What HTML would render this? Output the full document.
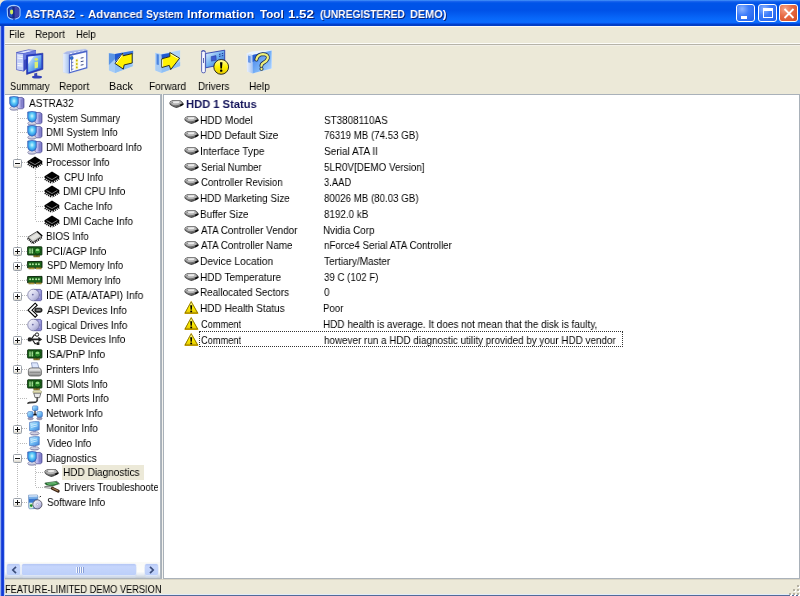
<!DOCTYPE html><html><head><meta charset="utf-8"><style>
*{margin:0;padding:0;box-sizing:border-box}
html,body{width:800px;height:596px;overflow:hidden;background:#ECE9D8;font-family:"Liberation Sans", sans-serif;font-size:10px;color:#000}
.a{position:absolute}
.t{will-change:transform;position:absolute;white-space:nowrap;line-height:12px;height:12px}
svg.i{position:absolute;overflow:visible}
</style></head><body>
<svg width="0" height="0" style="position:absolute">
<defs>
<radialGradient id="gscreen" cx="0.5" cy="0.42" r="0.62"><stop offset="0" stop-color="#d0faff"/><stop offset="0.4" stop-color="#5ccaf8"/><stop offset="0.85" stop-color="#2a88e0"/><stop offset="1" stop-color="#2a60c0"/></radialGradient>
<linearGradient id="gtower" x1="0" y1="0" x2="1" y2="0"><stop offset="0" stop-color="#d8d8fa"/><stop offset="0.6" stop-color="#9c9ae0"/><stop offset="1" stop-color="#6a68b8"/></linearGradient>
<linearGradient id="gbase" x1="0" y1="0" x2="0" y2="1"><stop offset="0" stop-color="#ffffff"/><stop offset="1" stop-color="#a8a8c8"/></linearGradient>
<linearGradient id="ggray" x1="0" y1="0" x2="0" y2="1"><stop offset="0" stop-color="#f4f4f4"/><stop offset="1" stop-color="#8a8a8a"/></linearGradient>
<linearGradient id="gyel" x1="0" y1="0" x2="0" y2="1"><stop offset="0" stop-color="#fffab0"/><stop offset="0.5" stop-color="#fff200"/><stop offset="1" stop-color="#e8c800"/></linearGradient>
<linearGradient id="gyel2" x1="0" y1="0" x2="1" y2="1"><stop offset="0" stop-color="#ffff80"/><stop offset="1" stop-color="#f0e000"/></linearGradient>
<linearGradient id="gdisc" x1="0" y1="0" x2="1" y2="1"><stop offset="0" stop-color="#ffffff"/><stop offset="0.6" stop-color="#c8c8e8"/><stop offset="1" stop-color="#8888b8"/></linearGradient>
<linearGradient id="gmon" x1="0" y1="0" x2="1" y2="1"><stop offset="0" stop-color="#d8f4ff"/><stop offset="0.45" stop-color="#78c4f8"/><stop offset="1" stop-color="#3a80d8"/></linearGradient>
<linearGradient id="gboxl" x1="0" y1="0" x2="1" y2="0"><stop offset="0" stop-color="#e8f0ff"/><stop offset="1" stop-color="#a8c4f0"/></linearGradient>
<linearGradient id="gboxf" x1="0" y1="0" x2="1" y2="1"><stop offset="0" stop-color="#3a78e8"/><stop offset="0.6" stop-color="#80b8f8"/><stop offset="1" stop-color="#b8d8ff"/></linearGradient>
<linearGradient id="gscr2" x1="0" y1="0" x2="1" y2="1"><stop offset="0" stop-color="#f0f8ff"/><stop offset="0.5" stop-color="#70b0f0"/><stop offset="1" stop-color="#2860d0"/></linearGradient>

















</defs></svg>
<div class="a" style="left:0;top:0;width:800px;height:26px;background:linear-gradient(180deg,#4a98fa 0px,#1a64ee 1.4px,#0054e8 3px,#0052e8 40%,#0868fa 72%,#0a6cff 86%,#0654ea 90%,#0040c8 94%,#003cc4 98%,#2a60d8 100%);border-radius:7px 0 0 0"></div>
<svg class="i" style="left:5px;top:4px" width="17" height="17" viewBox="0 0 17 17"><path d="M2.2 5 Q3.5 1.6 9 1.4 Q14.4 1.8 15 5 L15 11.6 Q14.2 14.6 9 15.2 Q3.4 14.8 2.6 11.8Z" fill="#162a88" stroke="#a8ccff" stroke-width="1.1"/><path d="M9.6 2.6 Q13.6 3 14 5.4 L14 11.4 Q13.4 13.6 9.6 14Z" fill="#4a4ab8" opacity="0.8"/><path d="M3.8 5.4 Q4.4 3.2 7.4 2.8 L7.4 13.6 Q4.2 13 3.8 11Z" fill="#2a5ad8" opacity="0.7"/><ellipse cx="6.6" cy="8" rx="1.6" ry="2.4" fill="#d0ec60"/><path d="M7.5 14.6 L9 16.4 L10.4 14.6Z" fill="#1a3aa8"/></svg>
<div class="t" style="left:25.20px;top:5.85px;height:16px;line-height:16px;font-size:11.6px;transform:scaleX(0.9415);transform-origin:0 0;font-weight:bold;color:#fff;text-shadow:1px 1px 0 #0a1e6e">ASTRA32</div>
<div class="t" style="left:80.40px;top:5.85px;height:16px;line-height:16px;font-size:11.6px;transform:scaleX(0.975);transform-origin:0 0;font-weight:bold;color:#fff;text-shadow:1px 1px 0 #0a1e6e">-</div>
<div class="t" style="left:87.70px;top:5.85px;height:16px;line-height:16px;font-size:11.6px;transform:scaleX(0.9873);transform-origin:0 0;font-weight:bold;color:#fff;text-shadow:1px 1px 0 #0a1e6e">Advanced</div>
<div class="t" style="left:146.00px;top:5.85px;height:16px;line-height:16px;font-size:11.6px;transform:scaleX(0.8951);transform-origin:0 0;font-weight:bold;color:#fff;text-shadow:1px 1px 0 #0a1e6e">System</div>
<div class="t" style="left:187.40px;top:5.85px;height:16px;line-height:16px;font-size:11.6px;transform:scaleX(1.0547);transform-origin:0 0;font-weight:bold;color:#fff;text-shadow:1px 1px 0 #0a1e6e">Information</div>
<div class="t" style="left:260.30px;top:5.85px;height:16px;line-height:16px;font-size:11.6px;transform:scaleX(0.987);transform-origin:0 0;font-weight:bold;color:#fff;text-shadow:1px 1px 0 #0a1e6e">Tool</div>
<div class="t" style="left:288.00px;top:5.85px;height:16px;line-height:16px;font-size:11.6px;transform:scaleX(1.15);transform-origin:0 0;font-weight:bold;color:#fff;text-shadow:1px 1px 0 #0a1e6e">1.52</div>
<div class="t" style="left:319.60px;top:5.85px;height:16px;line-height:16px;font-size:11.6px;transform:scaleX(0.8844);transform-origin:0 0;font-weight:bold;color:#fff;text-shadow:1px 1px 0 #0a1e6e">(UNREGISTERED</div>
<div class="t" style="left:409.80px;top:5.85px;height:16px;line-height:16px;font-size:11.6px;transform:scaleX(0.9421);transform-origin:0 0;font-weight:bold;color:#fff;text-shadow:1px 1px 0 #0a1e6e">DEMO)</div>
<div class="a" style="left:736px;top:4px;width:19px;height:18px;border:1px solid #fff;border-radius:3px;background:radial-gradient(circle at 30% 25%,#8cb4ff 0%,#3d7dfb 40%,#1f5fe8 100%)"><div class="a" style="left:4px;top:11px;width:6px;height:3px;background:#fff"></div></div>
<div class="a" style="left:757.5px;top:4px;width:19px;height:18px;border:1px solid #fff;border-radius:3px;background:radial-gradient(circle at 30% 25%,#8cb4ff 0%,#3d7dfb 40%,#1f5fe8 100%)"><div class="a" style="left:4px;top:3px;width:10px;height:10px;border:1px solid #fff;border-top-width:3px"></div></div>
<div class="a" style="left:779px;top:4px;width:19px;height:18px;border:1px solid #fff;border-radius:3px;background:radial-gradient(circle at 30% 25%,#f6a487 0%,#e76a43 45%,#d24b22 100%)"><svg class="i" style="left:3px;top:3px" width="12" height="11" viewBox="0 0 12 11"><path d="M1.5 1 L10.5 10 M10.5 1 L1.5 10" stroke="#fff" stroke-width="1.8"/></svg></div>
<div class="a" style="left:0;top:26px;width:5px;height:570px;background:linear-gradient(90deg,#b8ccf4 0,#6a8ee8 1px,#1a40d8 1.6px,#0c34d4 3px,#2a5ae4 4.2px,#e4ecfa 4.6px,#f4f6fa 5px)"></div>
<div class="a" style="left:5px;top:593.6px;width:795px;height:2.4px;background:linear-gradient(180deg,#e2ecf8 0,#e2ecf8 45%,#5a72a0 55%,#4a6290 100%)"></div>
<div class="a" style="left:5px;top:26px;width:795px;height:1px;background:#fafaf8"></div>
<div class="t" style="left:8.70px;top:28.30px;height:12px;line-height:12px;font-size:10.8px;transform:scaleX(0.9);transform-origin:0 0;">File</div>
<div class="t" style="left:34.88px;top:28.30px;height:12px;line-height:12px;font-size:10.8px;transform:scaleX(0.9219);transform-origin:0 0;">Report</div>
<div class="t" style="left:76.11px;top:28.30px;height:12px;line-height:12px;font-size:10.8px;transform:scaleX(0.8857);transform-origin:0 0;">Help</div>
<div class="a" style="left:5px;top:43px;width:795px;height:1px;background:#fcfcf8"></div>
<div class="a" style="left:5px;top:44px;width:795px;height:1px;background:#b6b3a8"></div>
<div class="a" style="left:5px;top:45px;width:795px;height:1px;background:#f2f0e8"></div>
<svg class="i" style="left:14px;top:48px" width="30" height="30" viewBox="0 0 30 30">
 <path d="M2.4 4.5 L14.5 1.8 L22 2.5 L22 12 L9.7 23.5 L2.4 22Z" fill="#3a48c0"/>
 <path d="M2.4 4.5 L14.5 1.8 L22 2.5 L9.7 5.5Z" fill="#e0e8ff" stroke="#3a48c0" stroke-width="0.6"/>
 <path d="M2.9 5.2 L9.4 6 L9.4 22.8 L2.9 21.6Z" fill="#c4d0f8"/>
 <path d="M3.6 7.8 L8.6 8.4 M3.6 10 L8.6 10.6 M3.6 15.5 L8.6 16 M3.6 17.6 L8.6 18" stroke="#ffffff" stroke-width="0.9"/>
 <path d="M9.7 5.5 L22 2.5 L22 8 L9.7 12Z" fill="#6a7ae0"/>
 <path d="M12.6 7.2 L28.9 5.2 L28.9 21.3 L12.6 26.4Z" fill="#2840c8" stroke="#1a2a98" stroke-width="0.6"/>
 <path d="M14.2 8.8 L27.4 7 L27.4 20 L14.2 24.2Z" fill="url(#gscr2)"/>
 <path d="M14.2 8.8 L20 8 L14.2 16Z" fill="#ffffff" opacity="0.7"/>
 <ellipse cx="22.3" cy="11.4" rx="1.8" ry="1.3" fill="#d8ec68"/>
 <path d="M20.6 14 L24 13.4 L24 19.6 L20.6 20.4Z" fill="#dcef70"/>
 <path d="M20.2 25.6 L23.2 24.8 L23.2 28 L20.2 28.4Z" fill="#3a48b8"/>
 <ellipse cx="23" cy="29" rx="5" ry="1.5" fill="#3040b8"/>
</svg>
<div class="t" style="left:9.60px;top:79.90px;height:12px;line-height:12px;font-size:10.8px;transform:scaleX(0.8565);transform-origin:0 0;">Summary</div>
<svg class="i" style="left:60.5px;top:48px" width="30" height="30" viewBox="0 0 30 30">
 <path d="M2.3 5.4 L6 3.6 L24 1 L26.6 2 L26.6 20.2 L7.8 25.6 L2.3 24.2Z" fill="#dfe6f8" stroke="#c8d0e8" stroke-width="0.5"/>
 <path d="M2.3 5.4 L7.8 6.6 L7.8 25.4 L2.3 24.2Z" fill="url(#gboxl)"/>
 <path d="M2.3 5.4 L6 3.6 L24.4 1.2 L26.3 2.3 L7.8 6.6Z" fill="#aab8e8"/>
 <path d="M9 5.8 L11 5.4 M13 5 L15 4.6 M17 4.2 L19 3.8 M21 3.4 L23 3" stroke="#ffffff" stroke-width="0.9"/>
 <path d="M7.8 6.6 L26.3 2.3 L26.3 20.2 L7.8 25.4Z" fill="#4a64c8"/>
 <path d="M9 8 L25.2 4.2 L25.2 19.3 L9 23.9Z" fill="#fbfcff"/>
 <path d="M10.6 11 L10.6 22.6 M10.6 14.6 L12.4 14.2 M10.6 18 L12.4 17.6 M10.6 21.4 L12.4 21" stroke="#3048a8" stroke-width="0.7"/>
 <circle cx="10.6" cy="9.9" r="1.7" fill="#2a70d8" stroke="#1a3a90" stroke-width="0.4"/>
 <path d="M14.4 11.2 L17.2 10.6 L17.2 21.2 L14.4 22Z" fill="#f6f6b8"/>
 <circle cx="15.8" cy="12.5" r="0.9" fill="#c8b000"/><circle cx="15.8" cy="16" r="0.9" fill="#c8b000"/><circle cx="15.8" cy="19.4" r="0.9" fill="#c8b000"/>
 <path d="M19.7 10.2 L22.5 9.6 M19.7 13.7 L22.5 13.1 M19.7 17.2 L22.5 16.6" stroke="#2a3a78" stroke-width="0.9"/>
</svg>
<div class="t" style="left:59.47px;top:79.90px;height:12px;line-height:12px;font-size:10.8px;transform:scaleX(0.9281);transform-origin:0 0;">Report</div>
<svg class="i" style="left:106px;top:48px" width="30" height="30" viewBox="0 0 30 30">
 <path d="M2.9 5.2 L9 6 L27.1 2.8 L27.1 18 L9 24.9 L2.9 22.6Z" fill="#eaf4ff"/>
 <path d="M2.9 5.2 L9 6 L9 24.9 L2.9 22.6Z" fill="#a8ccf4"/>
 <path d="M2.9 5.2 L9 6 L9 11 L2.9 17Z" fill="#5a94e4"/>
 <path d="M9 6 L27.1 2.8 L27.1 18 L9 24.9Z" fill="#a8d0fa"/>
 <path d="M9 16 L20 13 L27.1 18 L9 24.9Z" fill="#90c0f4"/>
 <path d="M9 6 L17 4.6 L9 14Z" fill="#2058d0"/>
 <path d="M17 4.6 L27.1 2.8 L27.1 6 L18 7.6Z" fill="#3a74dc"/>
 <path d="M9 15.5 L16.8 5.2 L17 7.8 L26.2 5.6 L26.2 15 L18.2 16.9 L17.3 21.1Z" fill="#fff200" stroke="#1a1a1a" stroke-width="0.9" stroke-linejoin="round"/>
 <path d="M10.2 15.2 L16.4 6.8" stroke="#ffffff" stroke-width="0.9"/>
</svg>
<div class="t" style="left:109.31px;top:79.90px;height:12px;line-height:12px;font-size:10.8px;transform:scaleX(0.987);transform-origin:0 0;">Back</div>
<svg class="i" style="left:152.5px;top:48px" width="30" height="30" viewBox="0 0 30 30">
 <path d="M2.2 4.7 L8.3 6.1 L27.1 2.3 L27.1 17.9 L8.3 24.9 L2.2 22.6Z" fill="#eaf4ff"/>
 <path d="M2.2 4.7 L8.3 6.1 L8.3 24.9 L2.2 22.6Z" fill="#a8ccf4"/>
 <path d="M3.6 6 L5.8 6.6 L5.8 17 L3.6 16.4Z" fill="#4a84e0"/>
 <path d="M8.3 6.1 L27.1 2.3 L27.1 17.9 L8.3 24.9Z" fill="#b0d4fa"/>
 <path d="M8.3 20 L27.1 14 L27.1 17.9 L8.3 24.9Z" fill="#90c0f4"/>
 <path d="M8.3 6.6 L16.6 5 L16.8 8.6 L8.8 10.8Z" fill="#2058d0"/>
 <path d="M8.8 10.8 L16.8 8.6 L16.8 4.5 L26.6 10.3 L17.7 21.6 L16.3 17.4 L8.8 19.5Z" fill="#fff200" stroke="#1a1a1a" stroke-width="0.9" stroke-linejoin="round"/>
 <path d="M17.6 6.2 L25.4 10.6" stroke="#ffffff" stroke-width="0.8"/>
 <path d="M9.6 11.6 L9.6 18.6" stroke="#ffffff" stroke-width="0.8"/>
</svg>
<div class="t" style="left:148.66px;top:79.90px;height:12px;line-height:12px;font-size:10.8px;transform:scaleX(0.9368);transform-origin:0 0;">Forward</div>
<svg class="i" style="left:199px;top:48px" width="30" height="30" viewBox="0 0 30 30">
 <path d="M6.6 5.5 L25.7 2.2 L25.7 16 L6.6 19.8Z" fill="url(#gscr2)" stroke="#2a40b0" stroke-width="0.9" stroke-linejoin="round"/>
 <path d="M12.2 8.6 L17 7.6 L17.2 12.2 L12.4 13.2Z" fill="#3a5ad0" stroke="#2a3a98" stroke-width="0.5"/>
 <path d="M20 6.4 L21.6 6.1 M20 8.4 L21.6 8.1 M22.8 5.6 L24.2 5.3 M22.8 7.8 L24.2 7.5" stroke="#1a2a88" stroke-width="0.9"/>
 <rect x="2.6" y="3" width="3.8" height="21.8" rx="1.5" fill="#f8f8ff" stroke="#3a48a8" stroke-width="0.8"/>
 <path d="M2 3.6 L4 2.4 L6.6 3.4" stroke="#3a48a8" stroke-width="0.8" fill="none"/>
 <path d="M4.5 10 L4.5 15" stroke="#4a58a8" stroke-width="0.9"/>
 <circle cx="22.2" cy="18.9" r="7.4" fill="url(#gyel)" stroke="#1a1a1a" stroke-width="0.9"/>
 <path d="M21 14.2 L23.4 14.2 L23 20.4 L21.4 20.4Z" fill="#000"/>
 <rect x="21.1" y="21.6" width="2.2" height="2.2" rx="0.6" fill="#000"/>
</svg>
<div class="t" style="left:197.68px;top:79.90px;height:12px;line-height:12px;font-size:10.8px;transform:scaleX(0.9182);transform-origin:0 0;">Drivers</div>
<svg class="i" style="left:244px;top:48px" width="30" height="30" viewBox="0 0 30 30">
 <path d="M2.8 5.2 L8 3.4 L27.6 2 L28 20.6 L8.6 25.4 L3 23.6Z" fill="#e8f4ff"/>
 <path d="M2.8 5.2 L8.6 7 L8.6 25.4 L3 23.6Z" fill="url(#gboxl)"/>
 <path d="M4 7.4 L6.6 8.2 L6.6 15 L4 14.2Z" fill="#3a78e0" opacity="0.7"/>
 <path d="M8.6 7 L27.6 2.6 L27.6 20.6 L8.6 25.4Z" fill="url(#gboxf)"/>
 <path d="M8.6 7 L19 4.6 L13 12 L8.6 14Z" fill="#1850c8" opacity="0.75"/>
 <path d="M12.4 11.6 Q13.6 6.4 19 6.2 Q24.6 6.4 23.8 10.4 Q23 13 19.6 14.8 Q17.4 16 17.4 18" stroke="#1a2a50" stroke-width="3.8" fill="none" stroke-linecap="round"/>
 <path d="M12.4 11.6 Q13.6 6.4 19 6.2 Q24.6 6.4 23.8 10.4 Q23 13 19.6 14.8 Q17.4 16 17.4 18" stroke="#eef07a" stroke-width="2.3" fill="none" stroke-linecap="round"/>
 <circle cx="17.5" cy="20.9" r="1.6" fill="#eef07a" stroke="#1a2a50" stroke-width="0.8"/>
</svg>
<div class="t" style="left:248.97px;top:79.90px;height:12px;line-height:12px;font-size:10.8px;transform:scaleX(0.9333);transform-origin:0 0;">Help</div>
<div class="a" style="left:5px;top:94px;width:157px;height:486px;background:#fff"></div>
<div class="a" style="left:5px;top:94px;width:157px;height:1px;background:#a9b1b9"></div>
<div class="a" style="left:160px;top:94px;width:2px;height:486px;background:linear-gradient(90deg,#b4bcc4,#a4acb4)"></div>
<div class="a" style="left:5px;top:578px;width:157px;height:2px;background:linear-gradient(180deg,#a4acb4,#c0c6cc)"></div>
<div class="a" style="left:162px;top:94px;width:1px;height:486px;background:#f2f2ee"></div>
<div class="a" style="left:163px;top:94px;width:637px;height:486px;background:#fff"></div>
<div class="a" style="left:163px;top:94px;width:637px;height:1px;background:#a9b1b9"></div>
<div class="a" style="left:163px;top:94px;width:1px;height:486px;background:#a9b1b9"></div>
<div class="a" style="left:798.5px;top:94px;width:1.5px;height:486px;background:#a9b1b9"></div>
<div class="a" style="left:163px;top:578px;width:637px;height:2px;background:linear-gradient(180deg,#a4acb4,#c0c6cc)"></div>
<div class="a" style="left:17px;top:109.8px;width:1px;height:392.06px;background:repeating-linear-gradient(180deg,#bababa 0 1px,transparent 1px 2px)"></div>
<div class="a" style="left:35px;top:168.92px;width:1px;height:52.120000000000005px;background:repeating-linear-gradient(180deg,#bababa 0 1px,transparent 1px 2px)"></div>
<div class="a" style="left:35px;top:464.52px;width:1px;height:22.560000000000002px;background:repeating-linear-gradient(180deg,#bababa 0 1px,transparent 1px 2px)"></div>
<svg class="i" style="left:8.5px;top:94.80px" width="16" height="16" viewBox="0 0 16 16"><path d="M8 2.6 L13 2.4 L15 3.8 L15 12.6 L13.4 13.8 L8 13.8Z" fill="url(#gtower)" stroke="#4a4890" stroke-width="0.7"/>
 <path d="M12.2 4.6 L12.2 12.4" stroke="#6a68b0" stroke-width="0.6"/>
 <ellipse cx="4.9" cy="13.4" rx="4.2" ry="1.9" fill="url(#gbase)" stroke="#70709a" stroke-width="0.6"/>
 <path d="M0.7 2 Q5 0.9 9.3 2 L9.3 8.4 Q9 11.4 5 12.3 Q1 11.4 0.7 8.4Z" fill="url(#gscreen)" stroke="#3a5ab0" stroke-width="0.7"/></svg>
<div class="t" style="left:28.50px;top:96.80px;height:12px;line-height:12px;font-size:10.8px;transform:scaleX(0.9312);transform-origin:0 0;">ASTRA32</div>
<div class="a" style="left:18px;top:118px;width:9px;height:1px;background:repeating-linear-gradient(90deg,#bababa 0 1px,transparent 1px 2px)"></div>
<svg class="i" style="left:26.5px;top:109.58px" width="16" height="16" viewBox="0 0 16 16"><path d="M8 2.6 L13 2.4 L15 3.8 L15 12.6 L13.4 13.8 L8 13.8Z" fill="url(#gtower)" stroke="#4a4890" stroke-width="0.7"/>
 <path d="M12.2 4.6 L12.2 12.4" stroke="#6a68b0" stroke-width="0.6"/>
 <ellipse cx="4.9" cy="13.4" rx="4.2" ry="1.9" fill="url(#gbase)" stroke="#70709a" stroke-width="0.6"/>
 <path d="M0.7 2 Q5 0.9 9.3 2 L9.3 8.4 Q9 11.4 5 12.3 Q1 11.4 0.7 8.4Z" fill="url(#gscreen)" stroke="#3a5ab0" stroke-width="0.7"/></svg>
<div class="t" style="left:47.00px;top:111.58px;height:12px;line-height:12px;font-size:10.8px;transform:scaleX(0.8588);transform-origin:0 0;">System Summary</div>
<div class="a" style="left:18px;top:132px;width:9px;height:1px;background:repeating-linear-gradient(90deg,#bababa 0 1px,transparent 1px 2px)"></div>
<svg class="i" style="left:26.5px;top:124.36px" width="16" height="16" viewBox="0 0 16 16"><path d="M8 2.6 L13 2.4 L15 3.8 L15 12.6 L13.4 13.8 L8 13.8Z" fill="url(#gtower)" stroke="#4a4890" stroke-width="0.7"/>
 <path d="M12.2 4.6 L12.2 12.4" stroke="#6a68b0" stroke-width="0.6"/>
 <ellipse cx="4.9" cy="13.4" rx="4.2" ry="1.9" fill="url(#gbase)" stroke="#70709a" stroke-width="0.6"/>
 <path d="M0.7 2 Q5 0.9 9.3 2 L9.3 8.4 Q9 11.4 5 12.3 Q1 11.4 0.7 8.4Z" fill="url(#gscreen)" stroke="#3a5ab0" stroke-width="0.7"/></svg>
<div class="t" style="left:46.10px;top:126.36px;height:12px;line-height:12px;font-size:10.8px;transform:scaleX(0.8987);transform-origin:0 0;">DMI System Info</div>
<div class="a" style="left:18px;top:147px;width:9px;height:1px;background:repeating-linear-gradient(90deg,#bababa 0 1px,transparent 1px 2px)"></div>
<svg class="i" style="left:26.5px;top:139.14px" width="16" height="16" viewBox="0 0 16 16"><path d="M8 2.6 L13 2.4 L15 3.8 L15 12.6 L13.4 13.8 L8 13.8Z" fill="url(#gtower)" stroke="#4a4890" stroke-width="0.7"/>
 <path d="M12.2 4.6 L12.2 12.4" stroke="#6a68b0" stroke-width="0.6"/>
 <ellipse cx="4.9" cy="13.4" rx="4.2" ry="1.9" fill="url(#gbase)" stroke="#70709a" stroke-width="0.6"/>
 <path d="M0.7 2 Q5 0.9 9.3 2 L9.3 8.4 Q9 11.4 5 12.3 Q1 11.4 0.7 8.4Z" fill="url(#gscreen)" stroke="#3a5ab0" stroke-width="0.7"/></svg>
<div class="t" style="left:46.09px;top:141.14px;height:12px;line-height:12px;font-size:10.8px;transform:scaleX(0.9135);transform-origin:0 0;">DMI Motherboard Info</div>
<div class="a" style="left:18px;top:162px;width:9px;height:1px;background:repeating-linear-gradient(90deg,#bababa 0 1px,transparent 1px 2px)"></div>
<svg class="i" style="left:26.5px;top:153.92px" width="16" height="16" viewBox="0 0 16 16"><path d="M0.8 10 L7.8 14 M15.2 9.5 L8.2 13.8" stroke="#000" stroke-width="2" stroke-dasharray="1.1 0.9"/>
 <path d="M0.5 7.2 L8 2.6 L15.3 7 L15.3 8.8 L8 13 L0.5 8.8Z" fill="#000"/>
 <path d="M2.5 7.6 L8 10.6 L13.4 7.4" stroke="#9a9a9a" stroke-width="0.8" fill="none"/></svg>
<div class="t" style="left:46.09px;top:155.92px;height:12px;line-height:12px;font-size:10.8px;transform:scaleX(0.9147);transform-origin:0 0;">Processor Info</div>
<div class="a" style="left:13px;top:159px;width:9px;height:9px;border:1px solid #9aa0a8;border-radius:1.5px;background:linear-gradient(180deg,#fff 0,#fff 55%,#d8d4c8 100%)"></div>
<div class="a" style="left:15px;top:163px;width:5px;height:1px;background:#111"></div>
<div class="a" style="left:36px;top:177px;width:8px;height:1px;background:repeating-linear-gradient(90deg,#bababa 0 1px,transparent 1px 2px)"></div>
<svg class="i" style="left:43.5px;top:168.70px" width="16" height="16" viewBox="0 0 16 16"><path d="M0.8 10 L7.8 14 M15.2 9.5 L8.2 13.8" stroke="#000" stroke-width="2" stroke-dasharray="1.1 0.9"/>
 <path d="M0.5 7.2 L8 2.6 L15.3 7 L15.3 8.8 L8 13 L0.5 8.8Z" fill="#000"/>
 <path d="M2.5 7.6 L8 10.6 L13.4 7.4" stroke="#9a9a9a" stroke-width="0.8" fill="none"/></svg>
<div class="t" style="left:64.00px;top:170.70px;height:12px;line-height:12px;font-size:10.8px;transform:scaleX(0.8955);transform-origin:0 0;">CPU Info</div>
<div class="a" style="left:36px;top:191px;width:8px;height:1px;background:repeating-linear-gradient(90deg,#bababa 0 1px,transparent 1px 2px)"></div>
<svg class="i" style="left:43.5px;top:183.48px" width="16" height="16" viewBox="0 0 16 16"><path d="M0.8 10 L7.8 14 M15.2 9.5 L8.2 13.8" stroke="#000" stroke-width="2" stroke-dasharray="1.1 0.9"/>
 <path d="M0.5 7.2 L8 2.6 L15.3 7 L15.3 8.8 L8 13 L0.5 8.8Z" fill="#000"/>
 <path d="M2.5 7.6 L8 10.6 L13.4 7.4" stroke="#9a9a9a" stroke-width="0.8" fill="none"/></svg>
<div class="t" style="left:63.06px;top:185.48px;height:12px;line-height:12px;font-size:10.8px;transform:scaleX(0.9385);transform-origin:0 0;">DMI CPU Info</div>
<div class="a" style="left:36px;top:206px;width:8px;height:1px;background:repeating-linear-gradient(90deg,#bababa 0 1px,transparent 1px 2px)"></div>
<svg class="i" style="left:43.5px;top:198.26px" width="16" height="16" viewBox="0 0 16 16"><path d="M0.8 10 L7.8 14 M15.2 9.5 L8.2 13.8" stroke="#000" stroke-width="2" stroke-dasharray="1.1 0.9"/>
 <path d="M0.5 7.2 L8 2.6 L15.3 7 L15.3 8.8 L8 13 L0.5 8.8Z" fill="#000"/>
 <path d="M2.5 7.6 L8 10.6 L13.4 7.4" stroke="#9a9a9a" stroke-width="0.8" fill="none"/></svg>
<div class="t" style="left:64.00px;top:200.26px;height:12px;line-height:12px;font-size:10.8px;transform:scaleX(0.9269);transform-origin:0 0;">Cache Info</div>
<div class="a" style="left:36px;top:221px;width:8px;height:1px;background:repeating-linear-gradient(90deg,#bababa 0 1px,transparent 1px 2px)"></div>
<svg class="i" style="left:43.5px;top:213.04px" width="16" height="16" viewBox="0 0 16 16"><path d="M0.8 10 L7.8 14 M15.2 9.5 L8.2 13.8" stroke="#000" stroke-width="2" stroke-dasharray="1.1 0.9"/>
 <path d="M0.5 7.2 L8 2.6 L15.3 7 L15.3 8.8 L8 13 L0.5 8.8Z" fill="#000"/>
 <path d="M2.5 7.6 L8 10.6 L13.4 7.4" stroke="#9a9a9a" stroke-width="0.8" fill="none"/></svg>
<div class="t" style="left:63.07px;top:215.04px;height:12px;line-height:12px;font-size:10.8px;transform:scaleX(0.9338);transform-origin:0 0;">DMI Cache Info</div>
<div class="a" style="left:18px;top:236px;width:9px;height:1px;background:repeating-linear-gradient(90deg,#bababa 0 1px,transparent 1px 2px)"></div>
<svg class="i" style="left:26.5px;top:227.82px" width="16" height="16" viewBox="0 0 16 16"><path d="M0.6 10.4 L6 15.4 L14.8 9.6" stroke="#000" stroke-width="1.8" stroke-dasharray="1.1 0.8" fill="none"/>
 <path d="M0.8 9.2 L10.2 3.4 L15.2 8 L6 14.2Z" fill="#cfcfcb" stroke="#3a3a3a" stroke-width="0.8" stroke-linejoin="round"/>
 <path d="M3 9.4 L10 5.2 L12.6 7.8 L6 12Z" fill="#e4e4e0"/>
 <path d="M10.2 3.4 L15.2 8" stroke="#000" stroke-width="1.3"/></svg>
<div class="t" style="left:46.08px;top:229.82px;height:12px;line-height:12px;font-size:10.8px;transform:scaleX(0.9152);transform-origin:0 0;">BIOS Info</div>
<div class="a" style="left:18px;top:251px;width:9px;height:1px;background:repeating-linear-gradient(90deg,#bababa 0 1px,transparent 1px 2px)"></div>
<svg class="i" style="left:26.5px;top:242.60px" width="16" height="16" viewBox="0 0 16 16"><rect x="6.5" y="11.6" width="6.2" height="2.6" fill="#6a5a18"/>
 <path d="M6.9 12.9 L12.4 12.9" stroke="#e8d070" stroke-width="1" stroke-dasharray="0.8 0.6"/>
 <rect x="0.6" y="3.8" width="14.3" height="8.2" rx="0.5" fill="#1c6a1c" stroke="#0a280a" stroke-width="0.9"/>
 <circle cx="3" cy="6" r="0.85" fill="#b8eca8"/><circle cx="5.3" cy="6" r="0.85" fill="#b8eca8"/>
 <circle cx="3" cy="7.9" r="0.85" fill="#b8eca8"/><circle cx="5.3" cy="7.9" r="0.85" fill="#b8eca8"/>
 <circle cx="3" cy="9.8" r="0.85" fill="#b8eca8"/><circle cx="5.3" cy="9.8" r="0.85" fill="#b8eca8"/>
 <path d="M1.8 5 L6.5 5 M1.8 11 L6.5 11" stroke="#0a300a" stroke-width="0.5"/>
 <ellipse cx="10.6" cy="7.9" rx="3.3" ry="3.2" fill="#2a8a2a" stroke="#0a300a" stroke-width="0.7"/>
 <ellipse cx="10.4" cy="6.9" rx="1.8" ry="1.2" fill="#90d880"/></svg>
<div class="t" style="left:46.06px;top:244.60px;height:12px;line-height:12px;font-size:10.8px;transform:scaleX(0.9365);transform-origin:0 0;">PCI/AGP Info</div>
<div class="a" style="left:13px;top:247px;width:9px;height:9px;border:1px solid #9aa0a8;border-radius:1.5px;background:linear-gradient(180deg,#fff 0,#fff 55%,#d8d4c8 100%)"></div>
<div class="a" style="left:15px;top:251px;width:5px;height:1px;background:#111"></div>
<div class="a" style="left:17px;top:249px;width:1px;height:5px;background:#111"></div>
<div class="a" style="left:18px;top:265px;width:9px;height:1px;background:repeating-linear-gradient(90deg,#bababa 0 1px,transparent 1px 2px)"></div>
<svg class="i" style="left:26.5px;top:257.38px" width="16" height="16" viewBox="0 0 16 16"><path d="M0.6 4.6 L15 4.4 L15 10.8 L8.8 10.8 L8.2 11.6 L7.6 10.8 L0.6 10.8 L0.6 8.6 L0.2 7.8 L0.6 7Z" fill="#1a621a" stroke="#061e06" stroke-width="0.9"/>
 <circle cx="3.1" cy="7.2" r="1" fill="#b0e8a0"/><circle cx="5.9" cy="7.2" r="1" fill="#b0e8a0"/>
 <circle cx="9.1" cy="7.2" r="1" fill="#b0e8a0"/><circle cx="11.9" cy="7.2" r="1" fill="#b0e8a0"/>
 <path d="M1.6 11.4 L7.4 11.4 M9 11.4 L14.4 11.4" stroke="#7a6a20" stroke-width="1.6"/>
 <path d="M1.6 11.3 L7.4 11.3 M9 11.3 L14.4 11.3" stroke="#f0d860" stroke-width="0.8" stroke-dasharray="0.7 0.5"/></svg>
<div class="t" style="left:47.00px;top:259.38px;height:12px;line-height:12px;font-size:10.8px;transform:scaleX(0.8941);transform-origin:0 0;">SPD Memory Info</div>
<div class="a" style="left:13px;top:262px;width:9px;height:9px;border:1px solid #9aa0a8;border-radius:1.5px;background:linear-gradient(180deg,#fff 0,#fff 55%,#d8d4c8 100%)"></div>
<div class="a" style="left:15px;top:266px;width:5px;height:1px;background:#111"></div>
<div class="a" style="left:17px;top:264px;width:1px;height:5px;background:#111"></div>
<div class="a" style="left:18px;top:280px;width:9px;height:1px;background:repeating-linear-gradient(90deg,#bababa 0 1px,transparent 1px 2px)"></div>
<svg class="i" style="left:26.5px;top:272.16px" width="16" height="16" viewBox="0 0 16 16"><path d="M0.6 4.6 L15 4.4 L15 10.8 L8.8 10.8 L8.2 11.6 L7.6 10.8 L0.6 10.8 L0.6 8.6 L0.2 7.8 L0.6 7Z" fill="#1a621a" stroke="#061e06" stroke-width="0.9"/>
 <circle cx="3.1" cy="7.2" r="1" fill="#b0e8a0"/><circle cx="5.9" cy="7.2" r="1" fill="#b0e8a0"/>
 <circle cx="9.1" cy="7.2" r="1" fill="#b0e8a0"/><circle cx="11.9" cy="7.2" r="1" fill="#b0e8a0"/>
 <path d="M1.6 11.4 L7.4 11.4 M9 11.4 L14.4 11.4" stroke="#7a6a20" stroke-width="1.6"/>
 <path d="M1.6 11.3 L7.4 11.3 M9 11.3 L14.4 11.3" stroke="#f0d860" stroke-width="0.8" stroke-dasharray="0.7 0.5"/></svg>
<div class="t" style="left:46.10px;top:274.16px;height:12px;line-height:12px;font-size:10.8px;transform:scaleX(0.9024);transform-origin:0 0;">DMI Memory Info</div>
<div class="a" style="left:18px;top:295px;width:9px;height:1px;background:repeating-linear-gradient(90deg,#bababa 0 1px,transparent 1px 2px)"></div>
<svg class="i" style="left:26.5px;top:286.94px" width="16" height="16" viewBox="0 0 16 16"><path d="M7.5 2.4 L13.6 2.4 L14.6 3.4 L14.6 13 L13.6 13.7 L7.5 13.7Z" fill="#8a88d0" stroke="#4a4890" stroke-width="0.7"/>
 <path d="M11.4 4 L13.4 4 M11.4 6 L13.4 6 M12 9 L12 11" stroke="#d8d8ff" stroke-width="0.9"/>
 <circle cx="6.5" cy="8" r="5.8" fill="url(#gdisc)" stroke="#6a6a98" stroke-width="0.7"/>
 <circle cx="5.8" cy="7.6" r="0.9" fill="#6a6aa0"/></svg>
<div class="t" style="left:46.04px;top:288.94px;height:12px;line-height:12px;font-size:10.8px;transform:scaleX(0.962);transform-origin:0 0;">IDE (ATA/ATAPI) Info</div>
<div class="a" style="left:13px;top:292px;width:9px;height:9px;border:1px solid #9aa0a8;border-radius:1.5px;background:linear-gradient(180deg,#fff 0,#fff 55%,#d8d4c8 100%)"></div>
<div class="a" style="left:15px;top:296px;width:5px;height:1px;background:#111"></div>
<div class="a" style="left:17px;top:294px;width:1px;height:5px;background:#111"></div>
<div class="a" style="left:18px;top:310px;width:9px;height:1px;background:repeating-linear-gradient(90deg,#bababa 0 1px,transparent 1px 2px)"></div>
<svg class="i" style="left:26.5px;top:301.72px" width="16" height="16" viewBox="0 0 16 16"><path d="M8.2 1.2 L1 8.2 L8.2 15.2 L10.2 13.2 L5 8.2 L10.2 3.2Z" fill="#fff" stroke="#000" stroke-width="1.1" stroke-linejoin="miter"/>
 <rect x="7.8" y="6.2" width="7.2" height="4" rx="1.6" fill="#333" stroke="#000" stroke-width="0.8"/>
 <rect x="9.4" y="7.4" width="4.2" height="1.4" fill="#9a9a9a"/></svg>
<div class="t" style="left:47.00px;top:303.72px;height:12px;line-height:12px;font-size:10.8px;transform:scaleX(0.9172);transform-origin:0 0;">ASPI Devices Info</div>
<div class="a" style="left:18px;top:324px;width:9px;height:1px;background:repeating-linear-gradient(90deg,#bababa 0 1px,transparent 1px 2px)"></div>
<svg class="i" style="left:26.5px;top:316.50px" width="16" height="16" viewBox="0 0 16 16"><path d="M7.5 2.4 L13.6 2.4 L14.6 3.4 L14.6 13 L13.6 13.7 L7.5 13.7Z" fill="#8a88d0" stroke="#4a4890" stroke-width="0.7"/>
 <path d="M11.4 4 L13.4 4 M11.4 6 L13.4 6 M12 9 L12 11" stroke="#d8d8ff" stroke-width="0.9"/>
 <circle cx="6.5" cy="8" r="5.8" fill="url(#gdisc)" stroke="#6a6a98" stroke-width="0.7"/>
 <circle cx="5.8" cy="7.6" r="0.9" fill="#6a6aa0"/></svg>
<div class="t" style="left:46.08px;top:318.50px;height:12px;line-height:12px;font-size:10.8px;transform:scaleX(0.9159);transform-origin:0 0;">Logical Drives Info</div>
<div class="a" style="left:18px;top:339px;width:9px;height:1px;background:repeating-linear-gradient(90deg,#bababa 0 1px,transparent 1px 2px)"></div>
<svg class="i" style="left:26.5px;top:331.28px" width="16" height="16" viewBox="0 0 16 16"><circle cx="2.8" cy="8.4" r="2.2" fill="#222"/>
 <path d="M2.8 8.4 L12.5 8.4" stroke="#222" stroke-width="1.8"/>
 <path d="M15.2 8.4 L11.4 5.8 L11.4 11Z" fill="#222"/>
 <path d="M4.5 7.8 L7.2 4 L9 4" stroke="#222" stroke-width="1.2" fill="none"/>
 <circle cx="10" cy="3.6" r="1.7" fill="#fff" stroke="#222" stroke-width="1"/>
 <path d="M5.6 9 L8 12.6 L9.6 12.6" stroke="#222" stroke-width="1.2" fill="none"/>
 <rect x="9.6" y="11.2" width="2.8" height="2.8" fill="#222"/></svg>
<div class="t" style="left:46.06px;top:333.28px;height:12px;line-height:12px;font-size:10.8px;transform:scaleX(0.9398);transform-origin:0 0;">USB Devices Info</div>
<div class="a" style="left:13px;top:336px;width:9px;height:9px;border:1px solid #9aa0a8;border-radius:1.5px;background:linear-gradient(180deg,#fff 0,#fff 55%,#d8d4c8 100%)"></div>
<div class="a" style="left:15px;top:340px;width:5px;height:1px;background:#111"></div>
<div class="a" style="left:17px;top:338px;width:1px;height:5px;background:#111"></div>
<div class="a" style="left:18px;top:354px;width:9px;height:1px;background:repeating-linear-gradient(90deg,#bababa 0 1px,transparent 1px 2px)"></div>
<svg class="i" style="left:26.5px;top:346.06px" width="16" height="16" viewBox="0 0 16 16"><rect x="6.5" y="11.6" width="6.2" height="2.6" fill="#6a5a18"/>
 <path d="M6.9 12.9 L12.4 12.9" stroke="#e8d070" stroke-width="1" stroke-dasharray="0.8 0.6"/>
 <rect x="0.6" y="3.8" width="14.3" height="8.2" rx="0.5" fill="#1c6a1c" stroke="#0a280a" stroke-width="0.9"/>
 <circle cx="3" cy="6" r="0.85" fill="#b8eca8"/><circle cx="5.3" cy="6" r="0.85" fill="#b8eca8"/>
 <circle cx="3" cy="7.9" r="0.85" fill="#b8eca8"/><circle cx="5.3" cy="7.9" r="0.85" fill="#b8eca8"/>
 <circle cx="3" cy="9.8" r="0.85" fill="#b8eca8"/><circle cx="5.3" cy="9.8" r="0.85" fill="#b8eca8"/>
 <path d="M1.8 5 L6.5 5 M1.8 11 L6.5 11" stroke="#0a300a" stroke-width="0.5"/>
 <ellipse cx="10.6" cy="7.9" rx="3.3" ry="3.2" fill="#2a8a2a" stroke="#0a300a" stroke-width="0.7"/>
 <ellipse cx="10.4" cy="6.9" rx="1.8" ry="1.2" fill="#90d880"/></svg>
<div class="t" style="left:46.04px;top:348.06px;height:12px;line-height:12px;font-size:10.8px;transform:scaleX(0.9617);transform-origin:0 0;">ISA/PnP Info</div>
<div class="a" style="left:18px;top:369px;width:9px;height:1px;background:repeating-linear-gradient(90deg,#bababa 0 1px,transparent 1px 2px)"></div>
<svg class="i" style="left:26.5px;top:360.84px" width="16" height="16" viewBox="0 0 16 16"><path d="M4.4 1.8 L10.4 1.8 L12 7 L5.4 7Z" fill="#dde8ff" stroke="#7a88b0" stroke-width="0.7"/>
 <path d="M1.4 9.4 Q1.4 7 4 7 L12 7 Q14.4 7.4 14.4 10 L14.4 13.2 Q14.2 15 12 15 L3.6 15 Q1.4 15 1.4 13Z" fill="url(#ggray)" stroke="#5a5a5a" stroke-width="0.8"/>
 <path d="M2.5 11.2 L13.4 11.2" stroke="#6a6a6a" stroke-width="0.8"/></svg>
<div class="t" style="left:46.10px;top:362.84px;height:12px;line-height:12px;font-size:10.8px;transform:scaleX(0.9018);transform-origin:0 0;">Printers Info</div>
<div class="a" style="left:13px;top:365px;width:9px;height:9px;border:1px solid #9aa0a8;border-radius:1.5px;background:linear-gradient(180deg,#fff 0,#fff 55%,#d8d4c8 100%)"></div>
<div class="a" style="left:15px;top:369px;width:5px;height:1px;background:#111"></div>
<div class="a" style="left:17px;top:367px;width:1px;height:5px;background:#111"></div>
<div class="a" style="left:18px;top:384px;width:9px;height:1px;background:repeating-linear-gradient(90deg,#bababa 0 1px,transparent 1px 2px)"></div>
<svg class="i" style="left:26.5px;top:375.62px" width="16" height="16" viewBox="0 0 16 16"><rect x="6.5" y="11.6" width="6.2" height="2.6" fill="#6a5a18"/>
 <path d="M6.9 12.9 L12.4 12.9" stroke="#e8d070" stroke-width="1" stroke-dasharray="0.8 0.6"/>
 <rect x="0.6" y="3.8" width="14.3" height="8.2" rx="0.5" fill="#1c6a1c" stroke="#0a280a" stroke-width="0.9"/>
 <circle cx="3" cy="6" r="0.85" fill="#b8eca8"/><circle cx="5.3" cy="6" r="0.85" fill="#b8eca8"/>
 <circle cx="3" cy="7.9" r="0.85" fill="#b8eca8"/><circle cx="5.3" cy="7.9" r="0.85" fill="#b8eca8"/>
 <circle cx="3" cy="9.8" r="0.85" fill="#b8eca8"/><circle cx="5.3" cy="9.8" r="0.85" fill="#b8eca8"/>
 <path d="M1.8 5 L6.5 5 M1.8 11 L6.5 11" stroke="#0a300a" stroke-width="0.5"/>
 <ellipse cx="10.6" cy="7.9" rx="3.3" ry="3.2" fill="#2a8a2a" stroke="#0a300a" stroke-width="0.7"/>
 <ellipse cx="10.4" cy="6.9" rx="1.8" ry="1.2" fill="#90d880"/></svg>
<div class="t" style="left:46.09px;top:377.62px;height:12px;line-height:12px;font-size:10.8px;transform:scaleX(0.9104);transform-origin:0 0;">DMI Slots Info</div>
<div class="a" style="left:18px;top:398px;width:9px;height:1px;background:repeating-linear-gradient(90deg,#bababa 0 1px,transparent 1px 2px)"></div>
<svg class="i" style="left:26.5px;top:390.40px" width="16" height="16" viewBox="0 0 16 16"><rect x="6" y="0.8" width="8.5" height="2.4" rx="1" fill="#f4f0c0" stroke="#8a8a60" stroke-width="0.6"/>
 <path d="M6.8 3.2 L13.8 3.2 L12.6 7.6 L8 7.6Z" fill="#e8e8e8" stroke="#555" stroke-width="0.8"/>
 <path d="M10.3 7.6 L10.3 10 Q10 12.6 6 12.4 L2.4 12.6 Q0.8 12.8 0.8 13.8" stroke="#222" stroke-width="1.6" fill="none"/>
 <path d="M10.3 8 L10.3 10 Q10 12 6 11.8 L2.4 12" stroke="#aaa" stroke-width="0.5" fill="none"/></svg>
<div class="t" style="left:46.09px;top:392.40px;height:12px;line-height:12px;font-size:10.8px;transform:scaleX(0.9074);transform-origin:0 0;">DMI Ports Info</div>
<div class="a" style="left:18px;top:413px;width:9px;height:1px;background:repeating-linear-gradient(90deg,#bababa 0 1px,transparent 1px 2px)"></div>
<svg class="i" style="left:26.5px;top:405.18px" width="16" height="16" viewBox="0 0 16 16"><ellipse cx="3.6" cy="13.6" rx="2.8" ry="1.3" fill="#9a98b8" stroke="#6a6a88" stroke-width="0.4"/>
 <ellipse cx="12.4" cy="13.6" rx="2.8" ry="1.3" fill="#9a98b8" stroke="#6a6a88" stroke-width="0.4"/>
 <path d="M8 4 L8 9.4 M4 10.2 L8 9.4 L12 10.2" stroke="#222" stroke-width="1.2"/>
 <rect x="5.5" y="0.9" width="5.4" height="4.6" rx="1.2" fill="url(#gmon)" stroke="#3a6ab8" stroke-width="0.6"/>
 <path d="M7.4 9 L8 8.2 L8.8 9 L8 10.2Z" fill="#000"/>
 <rect x="0.6" y="6.6" width="5.6" height="5.6" rx="1.4" fill="url(#gmon)" stroke="#3a6ab8" stroke-width="0.6"/>
 <rect x="9.8" y="6.6" width="5.6" height="5.6" rx="1.4" fill="url(#gmon)" stroke="#3a6ab8" stroke-width="0.6"/></svg>
<div class="t" style="left:46.06px;top:407.18px;height:12px;line-height:12px;font-size:10.8px;transform:scaleX(0.939);transform-origin:0 0;">Network Info</div>
<div class="a" style="left:18px;top:428px;width:9px;height:1px;background:repeating-linear-gradient(90deg,#bababa 0 1px,transparent 1px 2px)"></div>
<svg class="i" style="left:26.5px;top:419.96px" width="16" height="16" viewBox="0 0 16 16"><ellipse cx="7.6" cy="13.4" rx="4.6" ry="1.7" fill="url(#gbase)" stroke="#6a6890" stroke-width="0.7"/>
 <path d="M6.2 10.6 L9 10.6 L9 12.4 L6.2 12.4Z" fill="#9a98c0"/>
 <path d="M2.6 2.4 Q7.4 1.2 12.2 1.8 L12.2 9.8 Q7.4 11.4 2.6 10.6Z" fill="url(#gmon)" stroke="#3a68b8" stroke-width="0.7"/>
 <path d="M4 5.4 L10 4 M4 7.4 L10.4 5.8" stroke="#e8f8ff" stroke-width="0.7"/></svg>
<div class="t" style="left:46.09px;top:421.96px;height:12px;line-height:12px;font-size:10.8px;transform:scaleX(0.9089);transform-origin:0 0;">Monitor Info</div>
<div class="a" style="left:13px;top:425px;width:9px;height:9px;border:1px solid #9aa0a8;border-radius:1.5px;background:linear-gradient(180deg,#fff 0,#fff 55%,#d8d4c8 100%)"></div>
<div class="a" style="left:15px;top:429px;width:5px;height:1px;background:#111"></div>
<div class="a" style="left:17px;top:427px;width:1px;height:5px;background:#111"></div>
<div class="a" style="left:18px;top:443px;width:9px;height:1px;background:repeating-linear-gradient(90deg,#bababa 0 1px,transparent 1px 2px)"></div>
<svg class="i" style="left:26.5px;top:434.74px" width="16" height="16" viewBox="0 0 16 16"><ellipse cx="7.6" cy="13.4" rx="4.6" ry="1.7" fill="url(#gbase)" stroke="#6a6890" stroke-width="0.7"/>
 <path d="M6.2 10.6 L9 10.6 L9 12.4 L6.2 12.4Z" fill="#9a98c0"/>
 <path d="M2.6 2.4 Q7.4 1.2 12.2 1.8 L12.2 9.8 Q7.4 11.4 2.6 10.6Z" fill="url(#gmon)" stroke="#3a68b8" stroke-width="0.7"/>
 <path d="M4 5.4 L10 4 M4 7.4 L10.4 5.8" stroke="#e8f8ff" stroke-width="0.7"/></svg>
<div class="t" style="left:47.00px;top:436.74px;height:12px;line-height:12px;font-size:10.8px;transform:scaleX(0.9125);transform-origin:0 0;">Video Info</div>
<div class="a" style="left:18px;top:458px;width:9px;height:1px;background:repeating-linear-gradient(90deg,#bababa 0 1px,transparent 1px 2px)"></div>
<svg class="i" style="left:26.5px;top:449.52px" width="16" height="16" viewBox="0 0 16 16"><path d="M8 2.6 L13 2.4 L15 3.8 L15 12.6 L13.4 13.8 L8 13.8Z" fill="url(#gtower)" stroke="#4a4890" stroke-width="0.7"/>
 <path d="M12.2 4.6 L12.2 12.4" stroke="#6a68b0" stroke-width="0.6"/>
 <ellipse cx="4.9" cy="13.4" rx="4.2" ry="1.9" fill="url(#gbase)" stroke="#70709a" stroke-width="0.6"/>
 <path d="M0.7 2 Q5 0.9 9.3 2 L9.3 8.4 Q9 11.4 5 12.3 Q1 11.4 0.7 8.4Z" fill="url(#gscreen)" stroke="#3a5ab0" stroke-width="0.7"/></svg>
<div class="t" style="left:46.09px;top:451.52px;height:12px;line-height:12px;font-size:10.8px;transform:scaleX(0.9073);transform-origin:0 0;">Diagnostics</div>
<div class="a" style="left:13px;top:454px;width:9px;height:9px;border:1px solid #9aa0a8;border-radius:1.5px;background:linear-gradient(180deg,#fff 0,#fff 55%,#d8d4c8 100%)"></div>
<div class="a" style="left:15px;top:458px;width:5px;height:1px;background:#111"></div>
<div class="a" style="left:36px;top:472px;width:8px;height:1px;background:repeating-linear-gradient(90deg,#bababa 0 1px,transparent 1px 2px)"></div>
<svg class="i" style="left:43.5px;top:464.30px" width="16" height="16" viewBox="0 0 16 16"><g transform="translate(0,0.9)"> <path d="M0.3 6.9 Q0.6 5.4 3.8 4.1 L11.3 4.2 Q13.8 5.6 14.9 8 Q14.4 9.4 11.3 10.6 Q9 11.8 7.3 12 Q4.4 11.4 2.3 9.8 Q0.4 8.4 0.3 6.9Z" fill="#4a4a4a"/>
 <path d="M0.9 6.8 Q1.3 5.7 3.9 4.6 L10.9 4.7 Q12.6 5.8 13.4 7.1 Q11.8 8.3 10 8.8 Q7.8 9.6 6.4 9.6 Q3.6 9.1 2.2 8.1 Q1 7.3 0.9 6.8Z" fill="#b4b4b4"/>
 <path d="M4 5.5 Q6.4 4.9 10 5.3 Q11 6 9.8 6.9 Q7.4 7.6 5 7.2 Q3.4 6.5 4 5.5Z" fill="#ececec"/>
 <path d="M2.2 7.4 Q2.6 6.6 3.6 6.4" stroke="#6a6a6a" stroke-width="0.8" fill="none"/>
 <path d="M1.8 8.2 Q3.8 9.9 6.8 10.3 Q9.6 9.8 13.6 7.8" stroke="#9a9a9a" stroke-width="0.5" fill="none"/>
 <path d="M10.8 8.8 L14 7.5 L14.6 8.6 L11.6 10.4Z" fill="#080808"/>
 <path d="M12.2 5.6 L13.6 7" stroke="#5a5a5a" stroke-width="0.8"/></g></svg>
<div class="a" style="left:62px;top:465.3px;width:82px;height:14.6px;background:#ECE9D8"></div>
<div class="t" style="left:63.07px;top:466.30px;height:12px;line-height:12px;font-size:10.8px;transform:scaleX(0.9309);transform-origin:0 0;">HDD Diagnostics</div>
<div class="a" style="left:36px;top:487px;width:8px;height:1px;background:repeating-linear-gradient(90deg,#bababa 0 1px,transparent 1px 2px)"></div>
<svg class="i" style="left:43.5px;top:479.08px" width="16" height="16" viewBox="0 0 16 16"><path d="M0.8 4.1 L12.5 2.4 L15.3 4.7 L8.5 7 L2.2 5.9Z" fill="#2e8a3a" stroke="#1a3a20" stroke-width="0.6" stroke-linejoin="round"/>
 <path d="M3 4.4 L11.6 3.2 M4.4 5.4 L12.4 4.4" stroke="#9ad8a0" stroke-width="0.6"/>
 <path d="M12.5 2.4 L15.3 4.7" stroke="#6a6a6a" stroke-width="0.9"/>
 <path d="M0.6 8.1 L9.6 8.7" stroke="#3a3a3a" stroke-width="2"/>
 <path d="M0.8 8.1 L9.4 8.6" stroke="#e4e4e4" stroke-width="1"/>
 <path d="M8.4 9.4 L14.2 12.2" stroke="#3a2414" stroke-width="3" stroke-linecap="round"/>
 <path d="M8.6 9.2 L13.6 11.6" stroke="#a07850" stroke-width="1.2" stroke-linecap="round"/></svg>
<div class="a" style="left:0;top:0;width:158.4px;height:596px;overflow:hidden"><div class="t" style="left:63.50px;top:481.08px;height:12px;line-height:12px;font-size:10.8px;transform:scaleX(0.899);transform-origin:0 0;">Drivers Troubleshooter</div></div>
<div class="a" style="left:18px;top:502px;width:9px;height:1px;background:repeating-linear-gradient(90deg,#bababa 0 1px,transparent 1px 2px)"></div>
<svg class="i" style="left:26.5px;top:493.86px" width="16" height="16" viewBox="0 0 16 16"><path d="M1.6 1.2 L10.4 1 L10.8 2.6 L10.2 14.4 L2.4 14.8 L1.8 13.6Z" fill="#7ab0e8" stroke="#4a70a8" stroke-width="0.6"/>
 <path d="M1.8 1.3 L10.4 1.1 L10.4 2.8 L1.8 3Z" fill="#c8dcf4"/>
 <path d="M2 5 L10.2 4.8 L10.2 8 L2 8.2Z" fill="#3a78d0"/>
 <path d="M2.2 9 L6 9 L6 14.2 L2.4 14.4Z" fill="#d8f0d8"/>
 <circle cx="4.2" cy="11.6" r="1.3" fill="#1a8a2a"/>
 <circle cx="10.4" cy="10.4" r="4.6" fill="url(#gdisc)" stroke="#303040" stroke-width="0.7"/>
 <circle cx="10.4" cy="10.4" r="1" fill="#fff" stroke="#8080b0" stroke-width="0.4"/>
 <path d="M12.6 3 L14 2.2" stroke="#333" stroke-width="1"/></svg>
<div class="t" style="left:47.00px;top:495.86px;height:12px;line-height:12px;font-size:10.8px;transform:scaleX(0.9159);transform-origin:0 0;">Software Info</div>
<div class="a" style="left:13px;top:498px;width:9px;height:9px;border:1px solid #9aa0a8;border-radius:1.5px;background:linear-gradient(180deg,#fff 0,#fff 55%,#d8d4c8 100%)"></div>
<div class="a" style="left:15px;top:502px;width:5px;height:1px;background:#111"></div>
<div class="a" style="left:17px;top:500px;width:1px;height:5px;background:#111"></div>
<div class="a" style="left:5px;top:562px;width:155px;height:16px;background:linear-gradient(180deg,#fafaf6 0,#fdfdfb 60%,#e4eaf2 80%,#c4ccd6 100%)"></div>
<div class="a" style="left:7px;top:563.6px;width:13.2px;height:11.4px;border-radius:1.5px;background:linear-gradient(180deg,#b4c6f4 0,#c6d6fc 25%,#bccffa 100%);box-shadow:0 0 0 0.6px #e8eefc, 0 2px 0 0.5px #d2dcec"></div>
<svg class="i" style="left:10.5px;top:565.5px" width="7" height="8" viewBox="0 0 7 8"><path d="M5 0.8 L1.8 4 L5 7.2" stroke="#3c4e7c" stroke-width="1.7" fill="none"/></svg>
<div class="a" style="left:22px;top:563.6px;width:114.2px;height:11.4px;border-radius:1.5px;background:linear-gradient(180deg,#b4c6f4 0,#c6d6fc 25%,#bccffa 100%);box-shadow:0 0 0 0.6px #e8eefc, 0 2px 0 0.5px #d2dcec"></div>
<div class="a" style="left:76px;top:567px;width:8px;height:6px;background:repeating-linear-gradient(90deg,#f4f8ff 0 1px,#8aa0d8 1px 2px)"></div>
<div class="a" style="left:144.8px;top:563.6px;width:13.1px;height:11.4px;border-radius:1.5px;background:linear-gradient(180deg,#b4c6f4 0,#c6d6fc 25%,#bccffa 100%);box-shadow:0 0 0 0.6px #e8eefc, 0 2px 0 0.5px #d2dcec"></div>
<svg class="i" style="left:147.8px;top:565.5px" width="7" height="8" viewBox="0 0 7 8"><path d="M2 0.8 L5.2 4 L2 7.2" stroke="#3c4e7c" stroke-width="1.7" fill="none"/></svg>
<svg class="i" style="left:168.7px;top:95.60px" width="16" height="16" viewBox="0 0 16 16"><path d="M0.3 6.9 Q0.6 5.4 3.8 4.1 L11.3 4.2 Q13.8 5.6 14.9 8 Q14.4 9.4 11.3 10.6 Q9 11.8 7.3 12 Q4.4 11.4 2.3 9.8 Q0.4 8.4 0.3 6.9Z" fill="#4a4a4a"/>
 <path d="M0.9 6.8 Q1.3 5.7 3.9 4.6 L10.9 4.7 Q12.6 5.8 13.4 7.1 Q11.8 8.3 10 8.8 Q7.8 9.6 6.4 9.6 Q3.6 9.1 2.2 8.1 Q1 7.3 0.9 6.8Z" fill="#b4b4b4"/>
 <path d="M4 5.5 Q6.4 4.9 10 5.3 Q11 6 9.8 6.9 Q7.4 7.6 5 7.2 Q3.4 6.5 4 5.5Z" fill="#ececec"/>
 <path d="M2.2 7.4 Q2.6 6.6 3.6 6.4" stroke="#6a6a6a" stroke-width="0.8" fill="none"/>
 <path d="M1.8 8.2 Q3.8 9.9 6.8 10.3 Q9.6 9.8 13.6 7.8" stroke="#9a9a9a" stroke-width="0.5" fill="none"/>
 <path d="M10.8 8.8 L14 7.5 L14.6 8.6 L11.6 10.4Z" fill="#080808"/>
 <path d="M12.2 5.6 L13.6 7" stroke="#5a5a5a" stroke-width="0.8"/></svg>
<div class="t" style="left:186.25px;top:97.80px;height:12px;line-height:12px;font-size:11.4px;transform:scaleX(0.9812);transform-origin:0 0;font-weight:bold;color:#14145a">HDD 1 Status</div>
<svg class="i" style="left:183.5px;top:111.52px" width="16" height="16" viewBox="0 0 16 16"><path d="M0.3 6.9 Q0.6 5.4 3.8 4.1 L11.3 4.2 Q13.8 5.6 14.9 8 Q14.4 9.4 11.3 10.6 Q9 11.8 7.3 12 Q4.4 11.4 2.3 9.8 Q0.4 8.4 0.3 6.9Z" fill="#4a4a4a"/>
 <path d="M0.9 6.8 Q1.3 5.7 3.9 4.6 L10.9 4.7 Q12.6 5.8 13.4 7.1 Q11.8 8.3 10 8.8 Q7.8 9.6 6.4 9.6 Q3.6 9.1 2.2 8.1 Q1 7.3 0.9 6.8Z" fill="#b4b4b4"/>
 <path d="M4 5.5 Q6.4 4.9 10 5.3 Q11 6 9.8 6.9 Q7.4 7.6 5 7.2 Q3.4 6.5 4 5.5Z" fill="#ececec"/>
 <path d="M2.2 7.4 Q2.6 6.6 3.6 6.4" stroke="#6a6a6a" stroke-width="0.8" fill="none"/>
 <path d="M1.8 8.2 Q3.8 9.9 6.8 10.3 Q9.6 9.8 13.6 7.8" stroke="#9a9a9a" stroke-width="0.5" fill="none"/>
 <path d="M10.8 8.8 L14 7.5 L14.6 8.6 L11.6 10.4Z" fill="#080808"/>
 <path d="M12.2 5.6 L13.6 7" stroke="#5a5a5a" stroke-width="0.8"/></svg>
<div class="t" style="left:199.66px;top:113.52px;height:12px;line-height:12px;font-size:10.8px;transform:scaleX(0.9418);transform-origin:0 0;">HDD Model</div>
<div class="t" style="left:323.60px;top:113.52px;height:12px;line-height:12px;font-size:10.8px;transform:scaleX(0.9174);transform-origin:0 0;">ST3808110AS</div>
<svg class="i" style="left:183.5px;top:127.24px" width="16" height="16" viewBox="0 0 16 16"><path d="M0.3 6.9 Q0.6 5.4 3.8 4.1 L11.3 4.2 Q13.8 5.6 14.9 8 Q14.4 9.4 11.3 10.6 Q9 11.8 7.3 12 Q4.4 11.4 2.3 9.8 Q0.4 8.4 0.3 6.9Z" fill="#4a4a4a"/>
 <path d="M0.9 6.8 Q1.3 5.7 3.9 4.6 L10.9 4.7 Q12.6 5.8 13.4 7.1 Q11.8 8.3 10 8.8 Q7.8 9.6 6.4 9.6 Q3.6 9.1 2.2 8.1 Q1 7.3 0.9 6.8Z" fill="#b4b4b4"/>
 <path d="M4 5.5 Q6.4 4.9 10 5.3 Q11 6 9.8 6.9 Q7.4 7.6 5 7.2 Q3.4 6.5 4 5.5Z" fill="#ececec"/>
 <path d="M2.2 7.4 Q2.6 6.6 3.6 6.4" stroke="#6a6a6a" stroke-width="0.8" fill="none"/>
 <path d="M1.8 8.2 Q3.8 9.9 6.8 10.3 Q9.6 9.8 13.6 7.8" stroke="#9a9a9a" stroke-width="0.5" fill="none"/>
 <path d="M10.8 8.8 L14 7.5 L14.6 8.6 L11.6 10.4Z" fill="#080808"/>
 <path d="M12.2 5.6 L13.6 7" stroke="#5a5a5a" stroke-width="0.8"/></svg>
<div class="t" style="left:199.67px;top:129.24px;height:12px;line-height:12px;font-size:10.8px;transform:scaleX(0.9265);transform-origin:0 0;">HDD Default Size</div>
<div class="t" style="left:323.60px;top:129.24px;height:12px;line-height:12px;font-size:10.8px;transform:scaleX(0.9);transform-origin:0 0;">76319 MB (74.53 GB)</div>
<svg class="i" style="left:183.5px;top:142.96px" width="16" height="16" viewBox="0 0 16 16"><path d="M0.3 6.9 Q0.6 5.4 3.8 4.1 L11.3 4.2 Q13.8 5.6 14.9 8 Q14.4 9.4 11.3 10.6 Q9 11.8 7.3 12 Q4.4 11.4 2.3 9.8 Q0.4 8.4 0.3 6.9Z" fill="#4a4a4a"/>
 <path d="M0.9 6.8 Q1.3 5.7 3.9 4.6 L10.9 4.7 Q12.6 5.8 13.4 7.1 Q11.8 8.3 10 8.8 Q7.8 9.6 6.4 9.6 Q3.6 9.1 2.2 8.1 Q1 7.3 0.9 6.8Z" fill="#b4b4b4"/>
 <path d="M4 5.5 Q6.4 4.9 10 5.3 Q11 6 9.8 6.9 Q7.4 7.6 5 7.2 Q3.4 6.5 4 5.5Z" fill="#ececec"/>
 <path d="M2.2 7.4 Q2.6 6.6 3.6 6.4" stroke="#6a6a6a" stroke-width="0.8" fill="none"/>
 <path d="M1.8 8.2 Q3.8 9.9 6.8 10.3 Q9.6 9.8 13.6 7.8" stroke="#9a9a9a" stroke-width="0.5" fill="none"/>
 <path d="M10.8 8.8 L14 7.5 L14.6 8.6 L11.6 10.4Z" fill="#080808"/>
 <path d="M12.2 5.6 L13.6 7" stroke="#5a5a5a" stroke-width="0.8"/></svg>
<div class="t" style="left:199.66px;top:144.96px;height:12px;line-height:12px;font-size:10.8px;transform:scaleX(0.9448);transform-origin:0 0;">Interface Type</div>
<div class="t" style="left:323.60px;top:144.96px;height:12px;line-height:12px;font-size:10.8px;transform:scaleX(0.9333);transform-origin:0 0;">Serial ATA II</div>
<svg class="i" style="left:183.5px;top:158.68px" width="16" height="16" viewBox="0 0 16 16"><path d="M0.3 6.9 Q0.6 5.4 3.8 4.1 L11.3 4.2 Q13.8 5.6 14.9 8 Q14.4 9.4 11.3 10.6 Q9 11.8 7.3 12 Q4.4 11.4 2.3 9.8 Q0.4 8.4 0.3 6.9Z" fill="#4a4a4a"/>
 <path d="M0.9 6.8 Q1.3 5.7 3.9 4.6 L10.9 4.7 Q12.6 5.8 13.4 7.1 Q11.8 8.3 10 8.8 Q7.8 9.6 6.4 9.6 Q3.6 9.1 2.2 8.1 Q1 7.3 0.9 6.8Z" fill="#b4b4b4"/>
 <path d="M4 5.5 Q6.4 4.9 10 5.3 Q11 6 9.8 6.9 Q7.4 7.6 5 7.2 Q3.4 6.5 4 5.5Z" fill="#ececec"/>
 <path d="M2.2 7.4 Q2.6 6.6 3.6 6.4" stroke="#6a6a6a" stroke-width="0.8" fill="none"/>
 <path d="M1.8 8.2 Q3.8 9.9 6.8 10.3 Q9.6 9.8 13.6 7.8" stroke="#9a9a9a" stroke-width="0.5" fill="none"/>
 <path d="M10.8 8.8 L14 7.5 L14.6 8.6 L11.6 10.4Z" fill="#080808"/>
 <path d="M12.2 5.6 L13.6 7" stroke="#5a5a5a" stroke-width="0.8"/></svg>
<div class="t" style="left:200.60px;top:160.68px;height:12px;line-height:12px;font-size:10.8px;transform:scaleX(0.8754);transform-origin:0 0;">Serial Number</div>
<div class="t" style="left:323.60px;top:160.68px;height:12px;line-height:12px;font-size:10.8px;transform:scaleX(0.91);transform-origin:0 0;">5LR0V[DEMO Version]</div>
<svg class="i" style="left:183.5px;top:174.40px" width="16" height="16" viewBox="0 0 16 16"><path d="M0.3 6.9 Q0.6 5.4 3.8 4.1 L11.3 4.2 Q13.8 5.6 14.9 8 Q14.4 9.4 11.3 10.6 Q9 11.8 7.3 12 Q4.4 11.4 2.3 9.8 Q0.4 8.4 0.3 6.9Z" fill="#4a4a4a"/>
 <path d="M0.9 6.8 Q1.3 5.7 3.9 4.6 L10.9 4.7 Q12.6 5.8 13.4 7.1 Q11.8 8.3 10 8.8 Q7.8 9.6 6.4 9.6 Q3.6 9.1 2.2 8.1 Q1 7.3 0.9 6.8Z" fill="#b4b4b4"/>
 <path d="M4 5.5 Q6.4 4.9 10 5.3 Q11 6 9.8 6.9 Q7.4 7.6 5 7.2 Q3.4 6.5 4 5.5Z" fill="#ececec"/>
 <path d="M2.2 7.4 Q2.6 6.6 3.6 6.4" stroke="#6a6a6a" stroke-width="0.8" fill="none"/>
 <path d="M1.8 8.2 Q3.8 9.9 6.8 10.3 Q9.6 9.8 13.6 7.8" stroke="#9a9a9a" stroke-width="0.5" fill="none"/>
 <path d="M10.8 8.8 L14 7.5 L14.6 8.6 L11.6 10.4Z" fill="#080808"/>
 <path d="M12.2 5.6 L13.6 7" stroke="#5a5a5a" stroke-width="0.8"/></svg>
<div class="t" style="left:200.60px;top:176.40px;height:12px;line-height:12px;font-size:10.8px;transform:scaleX(0.8945);transform-origin:0 0;">Controller Revision</div>
<div class="t" style="left:323.60px;top:176.40px;height:12px;line-height:12px;font-size:10.8px;transform:scaleX(0.871);transform-origin:0 0;">3.AAD</div>
<svg class="i" style="left:183.5px;top:190.12px" width="16" height="16" viewBox="0 0 16 16"><path d="M0.3 6.9 Q0.6 5.4 3.8 4.1 L11.3 4.2 Q13.8 5.6 14.9 8 Q14.4 9.4 11.3 10.6 Q9 11.8 7.3 12 Q4.4 11.4 2.3 9.8 Q0.4 8.4 0.3 6.9Z" fill="#4a4a4a"/>
 <path d="M0.9 6.8 Q1.3 5.7 3.9 4.6 L10.9 4.7 Q12.6 5.8 13.4 7.1 Q11.8 8.3 10 8.8 Q7.8 9.6 6.4 9.6 Q3.6 9.1 2.2 8.1 Q1 7.3 0.9 6.8Z" fill="#b4b4b4"/>
 <path d="M4 5.5 Q6.4 4.9 10 5.3 Q11 6 9.8 6.9 Q7.4 7.6 5 7.2 Q3.4 6.5 4 5.5Z" fill="#ececec"/>
 <path d="M2.2 7.4 Q2.6 6.6 3.6 6.4" stroke="#6a6a6a" stroke-width="0.8" fill="none"/>
 <path d="M1.8 8.2 Q3.8 9.9 6.8 10.3 Q9.6 9.8 13.6 7.8" stroke="#9a9a9a" stroke-width="0.5" fill="none"/>
 <path d="M10.8 8.8 L14 7.5 L14.6 8.6 L11.6 10.4Z" fill="#080808"/>
 <path d="M12.2 5.6 L13.6 7" stroke="#5a5a5a" stroke-width="0.8"/></svg>
<div class="t" style="left:199.68px;top:192.12px;height:12px;line-height:12px;font-size:10.8px;transform:scaleX(0.9175);transform-origin:0 0;">HDD Marketing Size</div>
<div class="t" style="left:323.60px;top:192.12px;height:12px;line-height:12px;font-size:10.8px;transform:scaleX(0.9);transform-origin:0 0;">80026 MB (80.03 GB)</div>
<svg class="i" style="left:183.5px;top:205.84px" width="16" height="16" viewBox="0 0 16 16"><path d="M0.3 6.9 Q0.6 5.4 3.8 4.1 L11.3 4.2 Q13.8 5.6 14.9 8 Q14.4 9.4 11.3 10.6 Q9 11.8 7.3 12 Q4.4 11.4 2.3 9.8 Q0.4 8.4 0.3 6.9Z" fill="#4a4a4a"/>
 <path d="M0.9 6.8 Q1.3 5.7 3.9 4.6 L10.9 4.7 Q12.6 5.8 13.4 7.1 Q11.8 8.3 10 8.8 Q7.8 9.6 6.4 9.6 Q3.6 9.1 2.2 8.1 Q1 7.3 0.9 6.8Z" fill="#b4b4b4"/>
 <path d="M4 5.5 Q6.4 4.9 10 5.3 Q11 6 9.8 6.9 Q7.4 7.6 5 7.2 Q3.4 6.5 4 5.5Z" fill="#ececec"/>
 <path d="M2.2 7.4 Q2.6 6.6 3.6 6.4" stroke="#6a6a6a" stroke-width="0.8" fill="none"/>
 <path d="M1.8 8.2 Q3.8 9.9 6.8 10.3 Q9.6 9.8 13.6 7.8" stroke="#9a9a9a" stroke-width="0.5" fill="none"/>
 <path d="M10.8 8.8 L14 7.5 L14.6 8.6 L11.6 10.4Z" fill="#080808"/>
 <path d="M12.2 5.6 L13.6 7" stroke="#5a5a5a" stroke-width="0.8"/></svg>
<div class="t" style="left:199.68px;top:207.84px;height:12px;line-height:12px;font-size:10.8px;transform:scaleX(0.9235);transform-origin:0 0;">Buffer Size</div>
<div class="t" style="left:323.60px;top:207.84px;height:12px;line-height:12px;font-size:10.8px;transform:scaleX(0.9104);transform-origin:0 0;">8192.0 kB</div>
<svg class="i" style="left:183.5px;top:221.56px" width="16" height="16" viewBox="0 0 16 16"><path d="M0.3 6.9 Q0.6 5.4 3.8 4.1 L11.3 4.2 Q13.8 5.6 14.9 8 Q14.4 9.4 11.3 10.6 Q9 11.8 7.3 12 Q4.4 11.4 2.3 9.8 Q0.4 8.4 0.3 6.9Z" fill="#4a4a4a"/>
 <path d="M0.9 6.8 Q1.3 5.7 3.9 4.6 L10.9 4.7 Q12.6 5.8 13.4 7.1 Q11.8 8.3 10 8.8 Q7.8 9.6 6.4 9.6 Q3.6 9.1 2.2 8.1 Q1 7.3 0.9 6.8Z" fill="#b4b4b4"/>
 <path d="M4 5.5 Q6.4 4.9 10 5.3 Q11 6 9.8 6.9 Q7.4 7.6 5 7.2 Q3.4 6.5 4 5.5Z" fill="#ececec"/>
 <path d="M2.2 7.4 Q2.6 6.6 3.6 6.4" stroke="#6a6a6a" stroke-width="0.8" fill="none"/>
 <path d="M1.8 8.2 Q3.8 9.9 6.8 10.3 Q9.6 9.8 13.6 7.8" stroke="#9a9a9a" stroke-width="0.5" fill="none"/>
 <path d="M10.8 8.8 L14 7.5 L14.6 8.6 L11.6 10.4Z" fill="#080808"/>
 <path d="M12.2 5.6 L13.6 7" stroke="#5a5a5a" stroke-width="0.8"/></svg>
<div class="t" style="left:200.60px;top:223.56px;height:12px;line-height:12px;font-size:10.8px;transform:scaleX(0.9104);transform-origin:0 0;">ATA Controller Vendor</div>
<div class="t" style="left:322.69px;top:223.56px;height:12px;line-height:12px;font-size:10.8px;transform:scaleX(0.9127);transform-origin:0 0;">Nvidia Corp</div>
<svg class="i" style="left:183.5px;top:237.28px" width="16" height="16" viewBox="0 0 16 16"><path d="M0.3 6.9 Q0.6 5.4 3.8 4.1 L11.3 4.2 Q13.8 5.6 14.9 8 Q14.4 9.4 11.3 10.6 Q9 11.8 7.3 12 Q4.4 11.4 2.3 9.8 Q0.4 8.4 0.3 6.9Z" fill="#4a4a4a"/>
 <path d="M0.9 6.8 Q1.3 5.7 3.9 4.6 L10.9 4.7 Q12.6 5.8 13.4 7.1 Q11.8 8.3 10 8.8 Q7.8 9.6 6.4 9.6 Q3.6 9.1 2.2 8.1 Q1 7.3 0.9 6.8Z" fill="#b4b4b4"/>
 <path d="M4 5.5 Q6.4 4.9 10 5.3 Q11 6 9.8 6.9 Q7.4 7.6 5 7.2 Q3.4 6.5 4 5.5Z" fill="#ececec"/>
 <path d="M2.2 7.4 Q2.6 6.6 3.6 6.4" stroke="#6a6a6a" stroke-width="0.8" fill="none"/>
 <path d="M1.8 8.2 Q3.8 9.9 6.8 10.3 Q9.6 9.8 13.6 7.8" stroke="#9a9a9a" stroke-width="0.5" fill="none"/>
 <path d="M10.8 8.8 L14 7.5 L14.6 8.6 L11.6 10.4Z" fill="#080808"/>
 <path d="M12.2 5.6 L13.6 7" stroke="#5a5a5a" stroke-width="0.8"/></svg>
<div class="t" style="left:200.60px;top:239.28px;height:12px;line-height:12px;font-size:10.8px;transform:scaleX(0.91);transform-origin:0 0;">ATA Controller Name</div>
<div class="t" style="left:323.60px;top:239.28px;height:12px;line-height:12px;font-size:10.8px;transform:scaleX(0.9057);transform-origin:0 0;">nForce4 Serial ATA Controller</div>
<svg class="i" style="left:183.5px;top:253.00px" width="16" height="16" viewBox="0 0 16 16"><path d="M0.3 6.9 Q0.6 5.4 3.8 4.1 L11.3 4.2 Q13.8 5.6 14.9 8 Q14.4 9.4 11.3 10.6 Q9 11.8 7.3 12 Q4.4 11.4 2.3 9.8 Q0.4 8.4 0.3 6.9Z" fill="#4a4a4a"/>
 <path d="M0.9 6.8 Q1.3 5.7 3.9 4.6 L10.9 4.7 Q12.6 5.8 13.4 7.1 Q11.8 8.3 10 8.8 Q7.8 9.6 6.4 9.6 Q3.6 9.1 2.2 8.1 Q1 7.3 0.9 6.8Z" fill="#b4b4b4"/>
 <path d="M4 5.5 Q6.4 4.9 10 5.3 Q11 6 9.8 6.9 Q7.4 7.6 5 7.2 Q3.4 6.5 4 5.5Z" fill="#ececec"/>
 <path d="M2.2 7.4 Q2.6 6.6 3.6 6.4" stroke="#6a6a6a" stroke-width="0.8" fill="none"/>
 <path d="M1.8 8.2 Q3.8 9.9 6.8 10.3 Q9.6 9.8 13.6 7.8" stroke="#9a9a9a" stroke-width="0.5" fill="none"/>
 <path d="M10.8 8.8 L14 7.5 L14.6 8.6 L11.6 10.4Z" fill="#080808"/>
 <path d="M12.2 5.6 L13.6 7" stroke="#5a5a5a" stroke-width="0.8"/></svg>
<div class="t" style="left:199.65px;top:255.00px;height:12px;line-height:12px;font-size:10.8px;transform:scaleX(0.9533);transform-origin:0 0;">Device Location</div>
<div class="t" style="left:323.60px;top:255.00px;height:12px;line-height:12px;font-size:10.8px;transform:scaleX(0.9282);transform-origin:0 0;">Tertiary/Master</div>
<svg class="i" style="left:183.5px;top:268.72px" width="16" height="16" viewBox="0 0 16 16"><path d="M0.3 6.9 Q0.6 5.4 3.8 4.1 L11.3 4.2 Q13.8 5.6 14.9 8 Q14.4 9.4 11.3 10.6 Q9 11.8 7.3 12 Q4.4 11.4 2.3 9.8 Q0.4 8.4 0.3 6.9Z" fill="#4a4a4a"/>
 <path d="M0.9 6.8 Q1.3 5.7 3.9 4.6 L10.9 4.7 Q12.6 5.8 13.4 7.1 Q11.8 8.3 10 8.8 Q7.8 9.6 6.4 9.6 Q3.6 9.1 2.2 8.1 Q1 7.3 0.9 6.8Z" fill="#b4b4b4"/>
 <path d="M4 5.5 Q6.4 4.9 10 5.3 Q11 6 9.8 6.9 Q7.4 7.6 5 7.2 Q3.4 6.5 4 5.5Z" fill="#ececec"/>
 <path d="M2.2 7.4 Q2.6 6.6 3.6 6.4" stroke="#6a6a6a" stroke-width="0.8" fill="none"/>
 <path d="M1.8 8.2 Q3.8 9.9 6.8 10.3 Q9.6 9.8 13.6 7.8" stroke="#9a9a9a" stroke-width="0.5" fill="none"/>
 <path d="M10.8 8.8 L14 7.5 L14.6 8.6 L11.6 10.4Z" fill="#080808"/>
 <path d="M12.2 5.6 L13.6 7" stroke="#5a5a5a" stroke-width="0.8"/></svg>
<div class="t" style="left:199.67px;top:270.72px;height:12px;line-height:12px;font-size:10.8px;transform:scaleX(0.9349);transform-origin:0 0;">HDD Temperature</div>
<div class="t" style="left:323.60px;top:270.72px;height:12px;line-height:12px;font-size:10.8px;transform:scaleX(0.8967);transform-origin:0 0;">39 C (102 F)</div>
<svg class="i" style="left:183.5px;top:284.44px" width="16" height="16" viewBox="0 0 16 16"><path d="M0.3 6.9 Q0.6 5.4 3.8 4.1 L11.3 4.2 Q13.8 5.6 14.9 8 Q14.4 9.4 11.3 10.6 Q9 11.8 7.3 12 Q4.4 11.4 2.3 9.8 Q0.4 8.4 0.3 6.9Z" fill="#4a4a4a"/>
 <path d="M0.9 6.8 Q1.3 5.7 3.9 4.6 L10.9 4.7 Q12.6 5.8 13.4 7.1 Q11.8 8.3 10 8.8 Q7.8 9.6 6.4 9.6 Q3.6 9.1 2.2 8.1 Q1 7.3 0.9 6.8Z" fill="#b4b4b4"/>
 <path d="M4 5.5 Q6.4 4.9 10 5.3 Q11 6 9.8 6.9 Q7.4 7.6 5 7.2 Q3.4 6.5 4 5.5Z" fill="#ececec"/>
 <path d="M2.2 7.4 Q2.6 6.6 3.6 6.4" stroke="#6a6a6a" stroke-width="0.8" fill="none"/>
 <path d="M1.8 8.2 Q3.8 9.9 6.8 10.3 Q9.6 9.8 13.6 7.8" stroke="#9a9a9a" stroke-width="0.5" fill="none"/>
 <path d="M10.8 8.8 L14 7.5 L14.6 8.6 L11.6 10.4Z" fill="#080808"/>
 <path d="M12.2 5.6 L13.6 7" stroke="#5a5a5a" stroke-width="0.8"/></svg>
<div class="t" style="left:199.68px;top:286.44px;height:12px;line-height:12px;font-size:10.8px;transform:scaleX(0.9208);transform-origin:0 0;">Reallocated Sectors</div>
<div class="t" style="left:323.60px;top:286.44px;height:12px;line-height:12px;font-size:10.8px;transform:scaleX(0.9167);transform-origin:0 0;">0</div>
<svg class="i" style="left:183.5px;top:300.16px" width="16" height="16" viewBox="0 0 16 16"><path d="M7.2 0.8 L14.4 13.2 Q14.6 14 13.6 14 L1 14 Q0 14 0.4 13.2Z" fill="#e8b800"/>
 <path d="M7.2 1.8 L13.6 13 L1 13Z" fill="url(#gyel)" stroke="#6a5a00" stroke-width="0.7" stroke-linejoin="round"/>
 <path d="M6.2 5.2 L8.2 5.2 L7.8 9.8 L6.6 9.8Z" fill="#000"/>
 <rect x="6.3" y="10.6" width="1.8" height="1.7" fill="#000"/></svg>
<div class="t" style="left:199.67px;top:302.16px;height:12px;line-height:12px;font-size:10.8px;transform:scaleX(0.9289);transform-origin:0 0;">HDD Health Status</div>
<div class="t" style="left:322.71px;top:302.16px;height:12px;line-height:12px;font-size:10.8px;transform:scaleX(0.8909);transform-origin:0 0;">Poor</div>
<svg class="i" style="left:183.5px;top:315.88px" width="16" height="16" viewBox="0 0 16 16"><path d="M7.2 0.8 L14.4 13.2 Q14.6 14 13.6 14 L1 14 Q0 14 0.4 13.2Z" fill="#e8b800"/>
 <path d="M7.2 1.8 L13.6 13 L1 13Z" fill="url(#gyel)" stroke="#6a5a00" stroke-width="0.7" stroke-linejoin="round"/>
 <path d="M6.2 5.2 L8.2 5.2 L7.8 9.8 L6.6 9.8Z" fill="#000"/>
 <rect x="6.3" y="10.6" width="1.8" height="1.7" fill="#000"/></svg>
<div class="t" style="left:200.60px;top:317.88px;height:12px;line-height:12px;font-size:10.8px;transform:scaleX(0.8574);transform-origin:0 0;">Comment</div>
<div class="t" style="left:322.68px;top:317.88px;height:12px;line-height:12px;font-size:10.8px;transform:scaleX(0.9203);transform-origin:0 0;">HDD health is average. It does not mean that the disk is faulty,</div>
<svg class="i" style="left:183.5px;top:331.60px" width="16" height="16" viewBox="0 0 16 16"><path d="M7.2 0.8 L14.4 13.2 Q14.6 14 13.6 14 L1 14 Q0 14 0.4 13.2Z" fill="#e8b800"/>
 <path d="M7.2 1.8 L13.6 13 L1 13Z" fill="url(#gyel)" stroke="#6a5a00" stroke-width="0.7" stroke-linejoin="round"/>
 <path d="M6.2 5.2 L8.2 5.2 L7.8 9.8 L6.6 9.8Z" fill="#000"/>
 <rect x="6.3" y="10.6" width="1.8" height="1.7" fill="#000"/></svg>
<div class="t" style="left:200.60px;top:333.60px;height:12px;line-height:12px;font-size:10.8px;transform:scaleX(0.8574);transform-origin:0 0;">Comment</div>
<div class="t" style="left:323.60px;top:333.60px;height:12px;line-height:12px;font-size:10.8px;transform:scaleX(0.9135);transform-origin:0 0;">however run a HDD diagnostic utility provided by your HDD vendor</div>
<div class="a" style="left:198.5px;top:331px;width:424px;height:16px;border:1px dotted #333"></div>
<div class="a" style="left:4px;top:579px;width:796px;height:1px;background:#d8d4c4"></div>
<div class="t" style="left:5.14px;top:583.40px;height:12px;line-height:12px;font-size:10.8px;transform:scaleX(0.8564);transform-origin:0 0;">FEATURE-LIMITED DEMO VERSION</div>
<div class="a" style="left:797px;top:585px;width:2px;height:2px;background:#b5b1a3;box-shadow:1px 1px 0 #fff"></div>
<div class="a" style="left:793px;top:589px;width:2px;height:2px;background:#b5b1a3;box-shadow:1px 1px 0 #fff"></div>
<div class="a" style="left:797px;top:589px;width:2px;height:2px;background:#b5b1a3;box-shadow:1px 1px 0 #fff"></div>
<div class="a" style="left:789px;top:593px;width:2px;height:2px;background:#b5b1a3;box-shadow:1px 1px 0 #fff"></div>
<div class="a" style="left:793px;top:593px;width:2px;height:2px;background:#b5b1a3;box-shadow:1px 1px 0 #fff"></div>
<div class="a" style="left:797px;top:593px;width:2px;height:2px;background:#b5b1a3;box-shadow:1px 1px 0 #fff"></div></body></html>
